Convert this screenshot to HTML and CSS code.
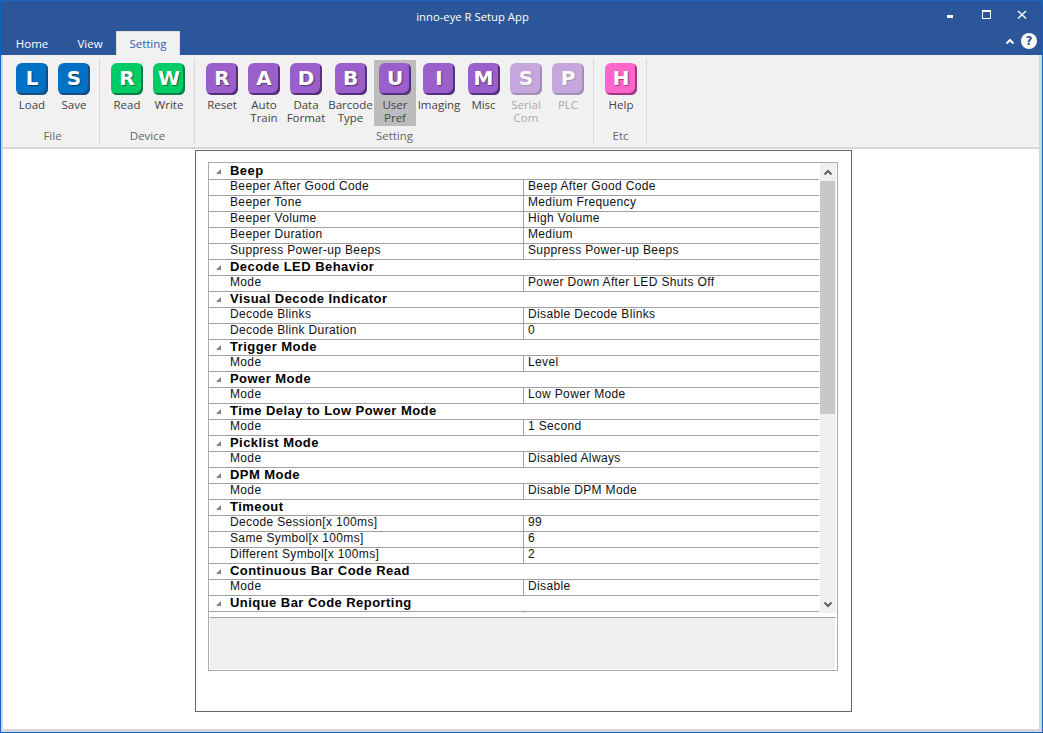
FILE: index.html
```html
<!DOCTYPE html>
<html lang="en">
<head>
    <meta charset="UTF-8">
    <title>inno-eye R Setup App</title>
    <link rel="stylesheet" href="styles.css">
</head>
<body>
    <div class="window">
        <div class="titlebar">
            <div class="app-title">inno-eye R Setup App</div>
            <div class="win-btn">
                <svg width="12" height="12" viewBox="0 0 12 12"><rect x="3" y="5" width="6" height="3" fill="#fff"/></svg>
            </div>
            <div class="win-btn">
                <svg width="12" height="12" viewBox="0 0 12 12"><rect x="2.5" y="0.5" width="8" height="8" fill="none" stroke="#fff"/><rect x="2" y="0" width="9" height="2" fill="#fff"/></svg>
            </div>
            <div class="win-btn">
                <svg width="12" height="12" viewBox="0 0 12 12"><path d="M2 1 L10 8.5 M10 1 L2 8.5" stroke="#fff" stroke-width="1.4" fill="none"/></svg>
            </div>
        </div>
        <div class="tabbar">
            <div class="tab tab-home">Home</div>
            <div class="tab tab-view">View</div>
            <div class="tab tab-active">Setting</div>
            <div class="tab-tools">
                <svg width="10" height="7" viewBox="0 0 10 7"><path d="M1.5 5.5 L5 2 L8.5 5.5" fill="none" stroke="#fff" stroke-width="2"/></svg>
                <div class="help-dot">?</div>
            </div>
        </div>
        <div class="ribbon">
            <div class="group group-file">
                <div class="btns">
                    <div class="rbtn"><div class="ico blue">L</div><div class="lbl">Load</div></div>
                    <div class="rbtn"><div class="ico blue">S</div><div class="lbl">Save</div></div>
                </div>
                <div class="group-name">File</div>
            </div>
            <div class="group group-device">
                <div class="btns">
                    <div class="rbtn"><div class="ico green">R</div><div class="lbl">Read</div></div>
                    <div class="rbtn"><div class="ico green">W</div><div class="lbl">Write</div></div>
                </div>
                <div class="group-name">Device</div>
            </div>
            <div class="group group-setting">
                <div class="btns">
                    <div class="rbtn"><div class="ico purple">R</div><div class="lbl">Reset</div></div>
                    <div class="rbtn"><div class="ico purple">A</div><div class="lbl">Auto<br>Train</div></div>
                    <div class="rbtn"><div class="ico purple">D</div><div class="lbl">Data<br>Format</div></div>
                    <div class="rbtn w47"><div class="ico purple">B</div><div class="lbl">Barcode<br>Type</div></div>
                    <div class="rbtn selected"><div class="ico purple">U</div><div class="lbl">User<br>Pref</div></div>
                    <div class="rbtn w46"><div class="ico purple">I</div><div class="lbl">Imaging</div></div>
                    <div class="rbtn w43"><div class="ico purple">M</div><div class="lbl">Misc</div></div>
                    <div class="rbtn disabled"><div class="ico purple">S</div><div class="lbl">Serial<br>Com</div></div>
                    <div class="rbtn disabled"><div class="ico purple">P</div><div class="lbl">PLC</div></div>
                </div>
                <div class="group-name">Setting</div>
            </div>
            <div class="group group-etc">
                <div class="btns">
                    <div class="rbtn"><div class="ico pink">H</div><div class="lbl">Help</div></div>
                </div>
                <div class="group-name">Etc</div>
            </div>
        </div>
        <div class="main">
            <div class="frame">
                <div class="propgrid">
                    <div class="grid-top">
                        <div class="list">
                            <div class="row cat"><svg class="tri" width="5" height="5" viewBox="0 0 5 5"><polygon points="5,0 5,5 0,5" fill="#808080"/></svg><span>Beep</span></div>
                            <div class="row"><div class="name">Beeper After Good Code</div><div class="val">Beep After Good Code</div></div>
                            <div class="row"><div class="name">Beeper Tone</div><div class="val">Medium Frequency</div></div>
                            <div class="row"><div class="name">Beeper Volume</div><div class="val">High Volume</div></div>
                            <div class="row"><div class="name">Beeper Duration</div><div class="val">Medium</div></div>
                            <div class="row"><div class="name">Suppress Power-up Beeps</div><div class="val">Suppress Power-up Beeps</div></div>
                            <div class="row cat"><svg class="tri" width="5" height="5" viewBox="0 0 5 5"><polygon points="5,0 5,5 0,5" fill="#808080"/></svg><span>Decode LED Behavior</span></div>
                            <div class="row"><div class="name">Mode</div><div class="val">Power Down After LED Shuts Off</div></div>
                            <div class="row cat"><svg class="tri" width="5" height="5" viewBox="0 0 5 5"><polygon points="5,0 5,5 0,5" fill="#808080"/></svg><span>Visual Decode Indicator</span></div>
                            <div class="row"><div class="name">Decode Blinks</div><div class="val">Disable Decode Blinks</div></div>
                            <div class="row"><div class="name">Decode Blink Duration</div><div class="val">0</div></div>
                            <div class="row cat"><svg class="tri" width="5" height="5" viewBox="0 0 5 5"><polygon points="5,0 5,5 0,5" fill="#808080"/></svg><span>Trigger Mode</span></div>
                            <div class="row"><div class="name">Mode</div><div class="val">Level</div></div>
                            <div class="row cat"><svg class="tri" width="5" height="5" viewBox="0 0 5 5"><polygon points="5,0 5,5 0,5" fill="#808080"/></svg><span>Power Mode</span></div>
                            <div class="row"><div class="name">Mode</div><div class="val">Low Power Mode</div></div>
                            <div class="row cat"><svg class="tri" width="5" height="5" viewBox="0 0 5 5"><polygon points="5,0 5,5 0,5" fill="#808080"/></svg><span>Time Delay to Low Power Mode</span></div>
                            <div class="row"><div class="name">Mode</div><div class="val">1 Second</div></div>
                            <div class="row cat"><svg class="tri" width="5" height="5" viewBox="0 0 5 5"><polygon points="5,0 5,5 0,5" fill="#808080"/></svg><span>Picklist Mode</span></div>
                            <div class="row"><div class="name">Mode</div><div class="val">Disabled Always</div></div>
                            <div class="row cat"><svg class="tri" width="5" height="5" viewBox="0 0 5 5"><polygon points="5,0 5,5 0,5" fill="#808080"/></svg><span>DPM Mode</span></div>
                            <div class="row"><div class="name">Mode</div><div class="val">Disable DPM Mode</div></div>
                            <div class="row cat"><svg class="tri" width="5" height="5" viewBox="0 0 5 5"><polygon points="5,0 5,5 0,5" fill="#808080"/></svg><span>Timeout</span></div>
                            <div class="row"><div class="name">Decode Session[x 100ms]</div><div class="val">99</div></div>
                            <div class="row"><div class="name">Same Symbol[x 100ms]</div><div class="val">6</div></div>
                            <div class="row"><div class="name">Different Symbol[x 100ms]</div><div class="val">2</div></div>
                            <div class="row cat"><svg class="tri" width="5" height="5" viewBox="0 0 5 5"><polygon points="5,0 5,5 0,5" fill="#808080"/></svg><span>Continuous Bar Code Read</span></div>
                            <div class="row"><div class="name">Mode</div><div class="val">Disable</div></div>
                            <div class="row cat"><svg class="tri" width="5" height="5" viewBox="0 0 5 5"><polygon points="5,0 5,5 0,5" fill="#808080"/></svg><span>Unique Bar Code Reporting</span></div>
                            <div class="row"><div class="name"></div><div class="val"></div></div>
                        </div>
                        <div class="scrollbar">
                            <div class="sb-arrow"><svg width="10" height="7" viewBox="0 0 10 7"><path d="M1.5 5.5 L5 2 L8.5 5.5" fill="none" stroke="#606060" stroke-width="2"/></svg></div>
                            <div class="sb-thumb"></div>
                            <div class="sb-track"></div>
                            <div class="sb-arrow"><svg width="10" height="7" viewBox="0 0 10 7"><path d="M1.5 1.5 L5 5 L8.5 1.5" fill="none" stroke="#606060" stroke-width="2"/></svg></div>
                        </div>
                    </div>
                    <div class="desc"></div>
                </div>
            </div>
        </div>
    </div>
</body>
</html>
```

FILE: styles.css
```css
* {
    box-sizing: border-box;
}
body {
    margin: 0;
    padding: 0;
    font-family: "Open Sans", "Noto Sans", sans-serif;
    background-color: #fff;
    overflow: hidden;
}
.window {
    width: 1043px;
    height: 733px;
    border: 1px solid #0a66c8;
    border-top-color: #1468c4;
    display: flex;
    flex-direction: column;
    background-color: #2b579a;
}
.titlebar {
    height: 30px;
    display: flex;
    align-items: center;
    color: #fff;
}
.app-title {
    flex: 1;
    padding-left: 12px;
    text-align: center;
    font-size: 11.3px;
}
.win-btn {
    width: 36px;
    height: 30px;
    display: flex;
    align-items: center;
    justify-content: center;
}
.win-btn:last-child {
    margin-right: 2px;
}
.tabbar {
    height: 24px;
    display: flex;
    color: #fff;
    font-size: 11.5px;
}
.tab {
    display: flex;
    align-items: center;
    justify-content: center;
}
.tab-home {
    width: 62px;
}
.tab-view {
    width: 53px;
    padding-left: 1px;
}
.tab-active {
    width: 64px;
    background-color: #f1f1f1;
    color: #2b62b8;
    border: 1px solid #dcdcdc;
    border-bottom: none;
}
.tab-tools {
    margin-left: auto;
    display: flex;
    align-items: center;
    gap: 6px;
    padding-right: 5px;
    padding-bottom: 4px;
}
.help-dot {
    width: 16px;
    height: 16px;
    border-radius: 50%;
    background-color: #fff;
    color: #2b579a;
    font-family: "DejaVu Sans", sans-serif;
    font-weight: bold;
    font-size: 12px;
    line-height: 16px;
    text-align: center;
}
.ribbon {
    height: 94px;
    background-color: #f1f1f1;
    border-left: 2px solid #d6d6d6;
    border-right: 3px solid #d6d6d6;
    border-bottom: 2px solid #d6d6d6;
    display: flex;
    padding-top: 3px;
    font-size: 11.5px;
}
.group {
    height: 86px;
    border-right: 1px solid #d8d8d8;
    display: flex;
    flex-direction: column;
    align-items: stretch;
}
.group-file {
    width: 97px;
    padding-left: 8px;
}
.group-device {
    width: 95px;
    padding-left: 6px;
}
.group-setting {
    width: 399px;
    padding-left: 6px;
}
.group-etc {
    width: 53px;
    padding-left: 6px;
}
.btns {
    display: flex;
    height: 68px;
    padding-top: 2px;
}
.rbtn {
    width: 42px;
    height: 66px;
    padding-top: 3px;
    display: flex;
    flex-direction: column;
    align-items: center;
    color: #444;
    white-space: nowrap;
}
.w47 {
    width: 47px;
}
.w46 {
    width: 46px;
}
.w43 {
    width: 43px;
}
.selected {
    background-color: #bcbcbc;
}
.disabled {
    color: #aaa;
}
.disabled .ico {
    opacity: 0.5;
}
.ico {
    width: 32px;
    height: 32px;
    flex: none;
    border-radius: 6px;
    font-family: "DejaVu Sans", sans-serif;
    font-weight: bold;
    font-size: 20px;
    line-height: 30px;
    text-align: center;
    color: #fff;
    text-shadow: 1px 1px 1px rgba(0, 0, 0, 0.45);
}
.blue {
    background-color: #0071c5;
    box-shadow: inset -2px -2px 0 #1b4e80;
}
.green {
    background-color: #00cc66;
    box-shadow: inset -2px -2px 0 #0f7f48;
}
.purple {
    background-color: #9b5fcb;
    box-shadow: inset -2px -2px 0 #56307c;
}
.pink {
    background-color: #ff66cc;
    box-shadow: inset -2px -2px 0 #9c3c7e;
}
.lbl {
    margin-top: 3px;
    line-height: 13px;
    text-align: center;
}
.group-name {
    text-align: center;
    color: #666;
    line-height: 14px;
    margin-top: 3px;
    padding-right: 5px;
}
.main {
    flex: 1;
    background-color: #fff;
    border-left: 2px solid #d6d6d6;
    border-right: 3px solid #d6d6d6;
    border-bottom: 3px solid #d6d6d6;
    padding-left: 192px;
}
.frame {
    width: 657px;
    height: 562px;
    margin-top: 1px;
    border: 1px solid #666;
    padding: 11px 0 0 12px;
}
.propgrid {
    width: 630px;
    height: 509px;
    border: 1px solid #aaa;
    display: flex;
    flex-direction: column;
}
.grid-top {
    height: 450px;
    display: flex;
}
.list {
    width: 610px;
    height: 450px;
    margin-right: 1px;
    overflow: hidden;
    padding-top: 1px;
    font-family: "Liberation Sans", Arial, sans-serif;
    font-size: 12px;
    letter-spacing: 0.35px;
    color: #111;
}
.row {
    height: 16px;
    display: flex;
    border-bottom: 1px solid #a0a0a0;
    line-height: 12px;
}
.cat {
    align-items: center;
    font-weight: bold;
    font-size: 13px;
    letter-spacing: 0.45px;
    color: #000;
}
.cat span {
    margin-top: -2px;
}
.tri {
    margin-left: 7px;
    margin-right: 9px;
}
.name {
    width: 315px;
    padding-left: 21px;
    border-right: 1px solid #a0a0a0;
    white-space: nowrap;
}
.val {
    flex: 1;
    padding-left: 4px;
    white-space: nowrap;
}
.scrollbar {
    width: 16px;
    display: flex;
    flex-direction: column;
    background-color: #f0f0f0;
}
.sb-arrow {
    height: 18px;
    flex: none;
    display: flex;
    align-items: center;
    justify-content: center;
}
.sb-thumb {
    height: 233px;
    flex: none;
    width: 15px;
    background-color: #c8c8c8;
}
.sb-track {
    flex: 1;
}
.desc {
    height: 53px;
    margin-top: 4px;
    margin-right: 1px;
    border: 1px solid #fff;
    border-top: 1px solid #a0a0a0;
    background-color: #efefef;
}
```
